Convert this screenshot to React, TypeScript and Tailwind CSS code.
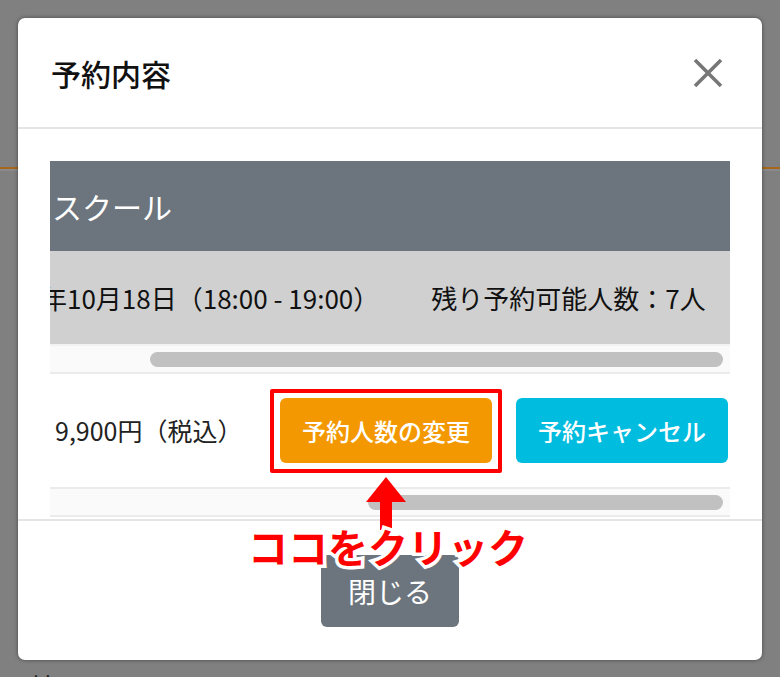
import React from 'react';

const jp = "font-['Noto_Sans_CJK_JP','Noto_Sans',sans-serif]";

function ScrollTrack({ thumbLeft }: { thumbLeft: number }) {
  // fake horizontal scrollbar under each scroller
  return (
    <div className="h-[26px] bg-[#fafafa] flex items-center pr-[7px]">
      <div className="h-[15px] flex-1 rounded-full bg-[#c1c1c1]" style={{ marginLeft: thumbLeft }} />
    </div>
  );
}

export default function App() {
  return (
    <div className={`relative h-[677px] w-[780px] overflow-hidden bg-[#808080] ${jp}`}>
      {/* page behind the overlay */}
      <div className="h-[167px]" />
      <div className="h-[2px] bg-[#a8661c]" />
      <div className="h-[2px] bg-[#8a8a8a]" />
      <div className="pl-[31px] pt-[501px] text-[24px] leading-none text-[#151515]">はい</div>

      {/* modal */}
      <div className="absolute left-[18px] top-[18px] w-[744px] rounded-[7px] bg-white shadow-[0_0_4px_rgba(0,0,0,0.45)]">
        <div className="flex h-[111px] items-center justify-between border-b-2 border-[#e5e5e5] pl-[33px] pr-[38px]">
          <h2 className="text-[30px] font-medium leading-none text-[#111]">予約内容</h2>
          <svg width="32" height="32" viewBox="0 0 32 32">
            <path d="M3 3 L29 29 M29 3 L3 29" stroke="#777" strokeWidth="3.6" strokeLinecap="butt" />
          </svg>
        </div>

        <div className="px-[32px] pt-[32px] pb-[2px]">
          {/* schedule table, scrolled sideways */}
          <div className="overflow-hidden">
            <div className="flex h-[90px] items-center bg-[#6c747d] pl-[2px] text-[30px] leading-none text-white">
              スクール
            </div>
            <div className="flex h-[93px] items-center whitespace-nowrap bg-[#d0d0d0] text-[26px] leading-none text-[#111]">
              <span className="-ml-[9px]">年10月18日（18:00 - 19:00）</span>
              <span className="ml-[52px]">残り予約可能人数：7人</span>
            </div>
          </div>
          <div className="h-[2px] bg-[#f2f2f2]" />
          <ScrollTrack thumbLeft={100} />
          <div className="h-[2px] bg-[#ebebeb]" />

          <div className="flex h-[113px] items-center">
            <span className="pl-[5px] text-[25px] leading-none text-[#222]">9,900円（税込）</span>
            <div className="ml-auto mr-[2px] flex gap-[24px]">
              <div className="relative">
                <button className="h-[65px] w-[212px] rounded-[6px] bg-[#f39800] text-[24px] font-medium text-white">
                  予約人数の変更
                </button>
                <div className="pointer-events-none absolute -left-[10px] -right-[10px] -top-[9px] -bottom-[10px] rounded-[2px] border-4 border-[#ff0000]" />
              </div>
              <button className="h-[65px] w-[212px] rounded-[6px] bg-[#00bcdf] text-[24px] font-medium text-white">
                予約キャンセル
              </button>
            </div>
          </div>

          <div className="h-[2px] bg-[#ebebeb]" />
          <ScrollTrack thumbLeft={318} />
          <div className="h-[2px] bg-[#ebebeb]" />
        </div>

        <div className="flex justify-center border-t-2 border-[#e5e5e5] pt-[34px] pb-[33px]">
          <button className="h-[72px] w-[138px] rounded-[6px] bg-[#6c757d] text-[28px] text-white">閉じる</button>
        </div>
      </div>

      {/* annotation */}
      <svg className="absolute left-[364px] top-[476px]" width="44" height="56" viewBox="0 0 44 56">
        <polygon points="22,1 42,26 2,26" fill="#ff0000" />
        <rect x="16" y="25" width="12" height="29" fill="#ff0000" />
      </svg>
      <div className="absolute left-[248px] top-[526px] text-[40px] font-bold leading-none text-[#ff0000] [-webkit-text-stroke:7px_#fff] [paint-order:stroke_fill]">
        ココをクリック
      </div>
    </div>
  );
}
